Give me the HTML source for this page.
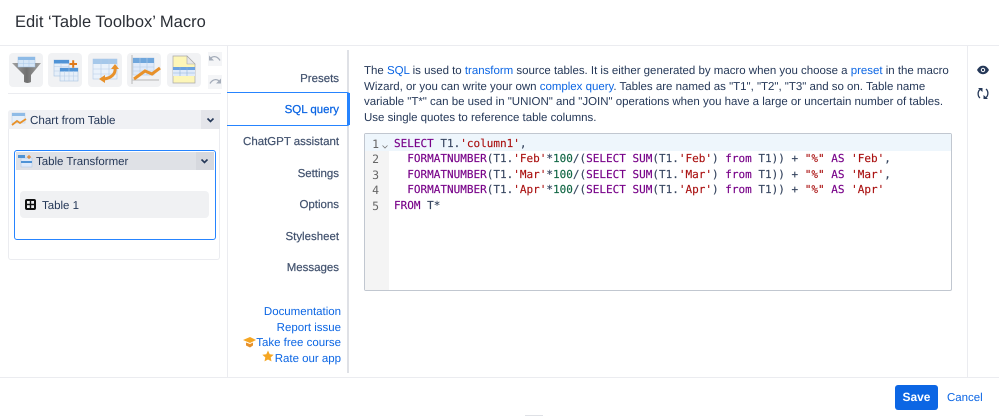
<!DOCTYPE html>
<html><head><meta charset="utf-8">
<style>
html,body{margin:0;padding:0;background:#fff}
#p{position:relative;width:999px;height:416px;overflow:hidden;background:#fff;font-family:"Liberation Sans",sans-serif;color:#253858;font-size:11.5px;letter-spacing:-.02px;text-rendering:geometricPrecision}
.a{position:absolute}
.t{position:absolute;white-space:nowrap;line-height:16px}
.b{color:#0c66e4}
.n{position:absolute;right:0;width:339px;text-align:right;white-space:nowrap;line-height:16px;left:0}
.nav{color:#42526e;font-weight:400;-webkit-text-stroke:.2px #42526e}
.lk{color:#0c66e4}
.ib{position:absolute;top:53px;width:34px;height:34px;background:#f1f2f4;border-radius:4px}
.ib svg,.a svg{display:block}
.c{position:absolute;left:394px;font-family:"DejaVu Sans Mono",monospace;font-size:11px;letter-spacing:0;line-height:16px;white-space:pre;color:#36455f;-webkit-text-stroke:.15px}
.ln{position:absolute;left:365px;width:14px;text-align:right;font-family:"DejaVu Sans Mono",monospace;font-size:11.5px;letter-spacing:0;line-height:16px;color:#666}
.k{color:#708}.s{color:#a11}.m{color:#164}
</style></head><body><div id="p">
<div class="t" style="left:15px;top:12px;font-size:16.5px;letter-spacing:0;line-height:20px;color:#2b2f36">Edit ‘Table Toolbox’ Macro</div>
<div class="a" style="left:0;top:45px;width:999px;height:1px;background:#ebecf0"></div>
<div class="a" style="left:0;top:377px;width:999px;height:1px;background:#ebecf0"></div>
<div class="a" style="left:227px;top:46px;width:1px;height:331px;background:#ebecf0"></div>
<div class="a" style="left:347px;top:50px;width:2px;height:323px;background:#dfe1e6"></div>
<div class="a" style="left:967px;top:46px;width:1px;height:331px;background:#ebecf0"></div>

<!-- toolbar -->
<div class="ib" style="left:9px"><svg width="34" height="34"><defs><linearGradient id="g"><stop offset="0" stop-color="#a3a3a3"/><stop offset=".5" stop-color="#6f6f6f"/><stop offset="1" stop-color="#a3a3a3"/></linearGradient></defs><path d="M3 10h29L22 22v7q-3.500 2-7 0v-7z" fill="url(#g)"/><rect x="9" y="4" width="17" height="10" fill="#d6e6f7" stroke="#9dbde0" stroke-width=".5"/><rect x="9" y="4" width="17" height="3" fill="#8dbae6"/><path d="M9 10.500h17M14.500 7v7M20 7v7" stroke="#a9c8ea" stroke-width=".5"/></svg></div>
<div class="ib" style="left:48px"><svg width="34" height="34"><rect x="6" y="7" width="15" height="16" fill="#e6eff9" stroke="#a9c3e2" stroke-width=".6"/><rect x="6" y="7" width="15" height="3.500" fill="#4f93d6"/><path d="M6 13.500h15M6 18h15M13 10v13" stroke="#b5cce6" stroke-width=".5"/><rect x="12" y="15" width="18" height="13" fill="#e6eff9" stroke="#a9c3e2" stroke-width=".6"/><rect x="12" y="15" width="18" height="3.500" fill="#4f93d6"/><path d="M12 23h18M21 15v13M16.500 18v10M25.500 18v10" stroke="#b5cce6" stroke-width=".5"/><path d="M21.500 11h7.500M25.200 7.200v7.500" stroke="#e0791a" stroke-width="2"/></svg></div>
<div class="ib" style="left:88px"><svg width="34" height="34"><rect x="5" y="6" width="24" height="20" fill="#eaf2fb" stroke="#b5cce6" stroke-width=".6"/><rect x="5" y="6" width="24" height="5" fill="#a6c8ea"/><path d="M5 16h24M5 21h24M13 6v20M21 6v20" stroke="#b5cce6" stroke-width=".6"/><path d="M27 15c1 6-4 10-11 11" fill="none" stroke="#e8912a" stroke-width="3"/><path d="M23 16l4-5 4 5zM17 22l-6 4 6 4z" fill="#e8912a"/></svg></div>
<div class="ib" style="left:127px"><svg width="34" height="34"><rect x="6" y="5" width="21" height="17" fill="#dfeafa" stroke="#b5cce6" stroke-width=".6"/><rect x="6" y="5" width="21" height="5" fill="#6fa6dc"/><path d="M6 14h21M6 18h21M13 5v17M20 5v17" stroke="#b5cce6" stroke-width=".6"/><path d="M5 2v29M5 27h27" fill="none" stroke="#c2c2c2" stroke-width="1.200"/><path d="M7 26l11-8 7 3 8-6" fill="none" stroke="#e8912a" stroke-width="3"/></svg></div>
<div class="ib" style="left:167px"><svg width="34" height="34"><path d="M6 3h14l8 8v19H6z" fill="#fdf6b8" stroke="#a8a8a8" stroke-width=".7"/><path d="M20 3v8h8z" fill="#e8e8e8" stroke="#a8a8a8" stroke-width=".6"/><rect x="6" y="14" width="22" height="9" fill="#dfeafa"/><rect x="6" y="14" width="22" height="3" fill="#6ba2e0"/><path d="M6 20h22M13 14v9M20 14v9" stroke="#8fb2d8" stroke-width=".6"/></svg></div>
<div class="a" style="left:208px;top:52px;width:14px;height:14px;background:#f4f5f7"><svg width="14" height="14"><path d="M2 7.500C4 3.500 9 3.500 12 8.500" fill="none" stroke="#a5adba" stroke-width="1.300"/><path d="M1 3.500v5h5z" fill="#a5adba"/></svg></div>
<div class="a" style="left:208px;top:75px;width:14px;height:14px;background:#f4f5f7"><svg width="14" height="14"><path d="M12 7.500C10 3.500 5 3.500 2 8.500" fill="none" stroke="#a5adba" stroke-width="1.300"/><path d="M13 3.500v5h-5z" fill="#a5adba"/></svg></div>
<div class="a" style="left:8px;top:93px;width:213px;height:1px;background:#ebecf0"></div>

<!-- tree -->
<div class="a" style="left:8px;top:110px;width:212px;height:150px;border:1px solid #ebecf0;border-top:0;border-radius:3px;box-sizing:border-box"></div>
<div class="a" style="left:8px;top:110px;width:212px;height:19px;background:#f0f1f4;border-radius:3px 3px 0 0"></div>
<div class="a" style="left:201px;top:110px;width:19px;height:19px;background:#e4e5ea"></div>
<div class="a" style="left:11px;top:112px"><svg width="16" height="15"><rect x="1" y="1" width="13" height="10" fill="#e6eff9" stroke="#b5cce6" stroke-width=".5"/><rect x="1" y="1" width="13" height="3" fill="#8fbbe6"/><path d="M1 13l5-4 3 2 6-4" fill="none" stroke="#e8912a" stroke-width="1.800"/></svg></div>
<div class="t" style="left:30px;top:113px;font-size:11.650px">Chart from Table</div>
<div class="a" style="left:206px;top:117px"><svg width="9" height="6"><path d="M1.500 1.500L4.500 4.500L7.500 1.500" fill="none" stroke="#253858" stroke-width="1.600"/></svg></div>

<div class="a" style="left:14px;top:150px;width:202px;height:90px;border:1.500px solid #2684ff;border-radius:3px;box-sizing:border-box"></div>
<div class="a" style="left:16px;top:152px;width:198px;height:18px;background:#dfe1e6"></div>
<div class="a" style="left:196px;top:152px;width:18px;height:18px;background:#d6d8de"></div>
<div class="a" style="left:18px;top:154px"><svg width="15" height="14"><rect x="3" y="4" width="11" height="9" fill="#dfeafa" stroke="#a9c3e2" stroke-width=".5"/><rect x="3" y="7" width="11" height="2" fill="#4f93d6"/><rect x="0" y="1" width="7" height="3" fill="#4f93d6"/><path d="M9 3h4M11 1v4" stroke="#e0791a" stroke-width="1"/></svg></div>
<div class="t" style="left:36px;top:154px">Table Transformer</div>
<div class="a" style="left:200px;top:158px"><svg width="9" height="6"><path d="M1.500 1.500L4.500 4.500L7.500 1.500" fill="none" stroke="#253858" stroke-width="1.600"/></svg></div>
<div class="a" style="left:20px;top:191px;width:189px;height:27px;background:#f0f1f3;border-radius:4px"></div>
<div class="a" style="left:25px;top:199px"><svg width="11" height="11"><rect x="0" y="0" width="11" height="11" rx="2" fill="#111"/><path d="M2 2h2.800v2.800H2zM6.200 2H9v2.800H6.200zM2 6.200h2.800V9H2zM6.200 6.200H9V9H6.200z" fill="#f0f1f3"/></svg></div>
<div class="t" style="left:42px;top:198px">Table 1</div>

<!-- nav -->
<div class="n nav" style="top:71px">Presets</div>
<div class="a" style="left:227px;top:92px;width:123px;height:34px;border:1.500px solid #2684ff;border-left:0;border-radius:0 3px 3px 0;box-sizing:border-box"></div>
<div class="a" style="left:347px;top:93px;width:3px;height:32px;background:#2684ff"></div>
<div class="n nav" style="top:102px;color:#0c66e4;-webkit-text-stroke:.25px #0c66e4">SQL query</div>
<div class="n nav" style="top:134px">ChatGPT assistant</div>
<div class="n nav" style="top:166px">Settings</div>
<div class="n nav" style="top:197px">Options</div>
<div class="n nav" style="top:229px">Stylesheet</div>
<div class="n nav" style="top:260px">Messages</div>
<div class="n lk" style="top:304px;width:341px">Documentation</div>
<div class="n lk" style="top:320px;width:341px">Report issue</div>
<div class="n lk" style="top:335px;width:341px">Take free course</div>
<div class="n lk" style="top:351px;width:341px">Rate our app</div>
<div class="a" style="left:243px;top:336px"><svg width="13" height="12"><path d="M0 4L7 1l6 3-6 3z" fill="#f5a623"/><path d="M3 6.500v3l4 2 3-2v-3l-3 1.500z" fill="#e8912a"/></svg></div>
<div class="a" style="left:262px;top:350px"><svg width="12" height="12"><path d="M6 .5l1.700 3.700 4 .5-3 2.700.8 4L6 9.500l-3.500 1.900.8-4-3-2.700 4-.5z" fill="#f5a623"/></svg></div>

<!-- description -->
<div class="t" style="left:364px;top:63px">The <span class="b">SQL</span> is used to <span class="b">transform</span> source tables. It is either generated by macro when you choose a <span class="b">preset</span> in the macro</div>
<div class="t" style="left:364px;top:79px">Wizard, or you can write your own <span class="b">complex query</span>. Tables are named as "T1", "T2", "T3" and so on. Table name</div>
<div class="t" style="left:364px;top:94px">variable "T*" can be used in "UNION" and "JOIN" operations when you have a large or uncertain number of tables.</div>
<div class="t" style="left:364px;top:110px">Use single quotes to reference table columns.</div>

<!-- editor -->
<div class="a" style="left:364px;top:133px;width:588px;height:158px;border:1px solid #c1c7d0;border-left-width:1.500px;border-radius:2px;box-sizing:border-box;background:#fff"></div>
<div class="a" style="left:365px;top:134px;width:24px;height:156px;background:#f4f4f4"></div>
<div class="a" style="left:365px;top:134px;width:586px;height:17px;background:#eef6fc"></div>
<div class="ln" style="top:136px">1</div><div class="ln" style="top:151px">2</div><div class="ln" style="top:167px">3</div><div class="ln" style="top:182px">4</div><div class="ln" style="top:198px">5</div>
<div class="a" style="left:382px;top:145px"><svg width="6" height="4"><path d="M.5.500L3 3 5.500.5" fill="none" stroke="#777" stroke-width=".8"/></svg></div>
<div class="c" style="top:136px"><span class="k">SELECT</span> T1.<span class="s">'column1'</span>,</div>
<div class="c" style="top:151px">  <span class="k">FORMATNUMBER</span>(T1.<span class="s">'Feb'</span>*<span class="m">100</span>/(<span class="k">SELECT</span> <span class="k">SUM</span>(T1.<span class="s">'Feb'</span>) <span class="k">from</span> T1)) + <span class="s">"%"</span> <span class="k">AS</span> <span class="s">'Feb'</span>,</div>
<div class="c" style="top:167px">  <span class="k">FORMATNUMBER</span>(T1.<span class="s">'Mar'</span>*<span class="m">100</span>/(<span class="k">SELECT</span> <span class="k">SUM</span>(T1.<span class="s">'Mar'</span>) <span class="k">from</span> T1)) + <span class="s">"%"</span> <span class="k">AS</span> <span class="s">'Mar'</span>,</div>
<div class="c" style="top:182px">  <span class="k">FORMATNUMBER</span>(T1.<span class="s">'Apr'</span>*<span class="m">100</span>/(<span class="k">SELECT</span> <span class="k">SUM</span>(T1.<span class="s">'Apr'</span>) <span class="k">from</span> T1)) + <span class="s">"%"</span> <span class="k">AS</span> <span class="s">'Apr'</span></div>
<div class="c" style="top:198px"><span class="k">FROM</span> T*</div>

<!-- right icons -->
<div class="a" style="left:977px;top:64px"><svg width="12" height="12" viewBox="0 0 12 12"><path d="M0 6C2 2.500 4 1.800 6 1.800S10 2.500 12 6C10 9.500 8 10.200 6 10.200S2 9.500 0 6z" fill="#253858"/><circle cx="6" cy="6" r="2.200" fill="#fff"/><circle cx="6" cy="6" r="1.200" fill="#253858"/></svg></div>
<div class="a" style="left:977px;top:87px"><svg width="12" height="13" viewBox="0 0 12 13"><path d="M3 11C.5 9 .5 4.500 3 2.500M9 2C11.500 4 11.500 8.500 9 10.500" fill="none" stroke="#253858" stroke-width="1.300"/><path d="M1 1h4.500v4zM11 12H6.500V8z" fill="#253858"/></svg></div>

<!-- footer -->
<div class="a" style="left:895px;top:385px;width:43px;height:25px;background:#0c66e4;border-radius:3px;color:#fff;font-weight:700;font-size:12px;text-align:center;line-height:25px">Save</div>
<div class="t" style="left:947px;top:390px;color:#0c66e4;font-size:11.500px">Cancel</div>
<div class="a" style="left:525px;top:415px;width:18px;height:1px;background:#dfe1e6"></div>
</div></body></html>
